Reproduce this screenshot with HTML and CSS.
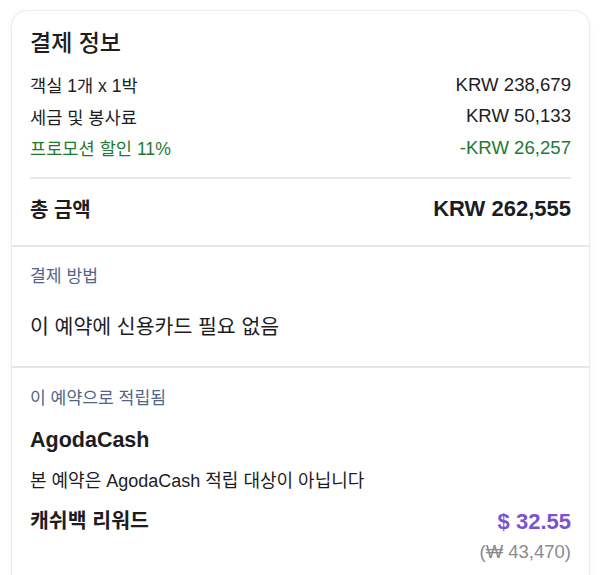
FILE: index.html
```html
<!DOCTYPE html>
<html lang="ko">
<head>
    <meta charset="UTF-8">
    <meta name="viewport" content="width=device-width, initial-scale=1.0">
    <title>결제 정보</title>
    <link rel="stylesheet" href="styles.css">
</head>
<body>
    <div class="payment-card">
        <!-- Price breakdown -->
        <div class="card-section price-section">
            <h2 class="card-title">결제 정보</h2>
            <div class="price-row">
                <span class="price-label">객실 1개 x 1박</span>
                <span class="price-value">KRW 238,679</span>
            </div>
            <div class="price-row">
                <span class="price-label">세금 및 봉사료</span>
                <span class="price-value">KRW 50,133</span>
            </div>
            <div class="price-row discount">
                <span class="price-label">프로모션 할인 11%</span>
                <span class="price-value">-KRW 26,257</span>
            </div>
            <div class="total-row">
                <span class="total-label">총 금액</span>
                <span class="total-value">KRW 262,555</span>
            </div>
        </div>

        <!-- Payment method -->
        <div class="card-section method-section">
            <p class="section-label">결제 방법</p>
            <p class="method-text">이 예약에 신용카드 필요 없음</p>
        </div>

        <!-- Rewards -->
        <div class="card-section reward-section">
            <p class="section-label">이 예약으로 적립됨</p>
            <h3 class="reward-title">AgodaCash</h3>
            <p class="reward-note">본 예약은 AgodaCash 적립 대상이 아닙니다</p>
            <div class="cashback-row">
                <span class="reward-title">캐쉬백 리워드</span>
                <div class="cashback-amount">
                    <span class="cashback-usd">$ 32.55</span>
                    <span class="cashback-krw">(₩ 43,470)</span>
                </div>
            </div>
        </div>
    </div>
</body>
</html>
```

FILE: styles.css
```css
body {
    font-family: "Liberation Sans", "Noto Sans CJK KR", sans-serif;
    background-color: #fff;
    color: #1d1d1f;
    margin: 0;
    overflow: hidden;
}

.payment-card {
    margin: 10px 10px 0 11px;
    border: 1px solid #ececef;
    border-radius: 16px;
    box-shadow: 0 1px 5px rgba(0, 0, 0, 0.05);
    background: #fff;
}

.card-section {
    padding: 0 18px;
}

.card-section + .card-section {
    border-top: 2px solid #e6e6ea;
}

.price-section {
    padding-top: 17px;
    padding-bottom: 21px;
}

.card-title {
    font-size: 23px;
    font-weight: 500;
    line-height: 30px;
    margin: 0 0 11px;
}

.price-row {
    display: flex;
    justify-content: space-between;
    align-items: center;
    height: 31.5px;
}

.price-label {
    font-size: 17.6px;
}

.price-value {
    font-size: 18.6px;
}

.discount {
    color: #1f7a36;
}

.total-row {
    display: flex;
    justify-content: space-between;
    align-items: center;
    margin-top: 13px;
    padding-top: 15px;
    border-top: 2px solid #e8e8ec;
    height: 30px;
}

.total-label {
    font-size: 20px;
    font-weight: 600;
}

.total-value {
    font-size: 22px;
    font-weight: bold;
}

.section-label {
    font-size: 17.2px;
    line-height: 24px;
    color: #52658a;
    margin: 0;
}

.method-section {
    padding-top: 17px;
    padding-bottom: 25px;
}

.method-text {
    font-size: 20.5px;
    line-height: 28px;
    margin: 25px 0 0;
}

.reward-section {
    padding-top: 18px;
    padding-bottom: 40px;
}

.reward-title {
    font-size: 21.5px;
    font-weight: bold;
    line-height: 28px;
    margin: 16px 0 0;
}

.reward-note {
    font-size: 18px;
    line-height: 24px;
    margin: 15px 0 0;
}

.cashback-row {
    display: flex;
    justify-content: space-between;
    align-items: flex-start;
    margin-top: 14px;
}

.cashback-row .reward-title {
    font-size: 20.5px;
    margin: 0;
}

.cashback-amount {
    display: flex;
    flex-direction: column;
    align-items: flex-end;
}

.cashback-usd {
    font-size: 22px;
    font-weight: bold;
    line-height: 30px;
    color: #7c52d4;
}

.cashback-krw {
    font-size: 18.5px;
    line-height: 30px;
    color: #8a8a8e;
}
```
